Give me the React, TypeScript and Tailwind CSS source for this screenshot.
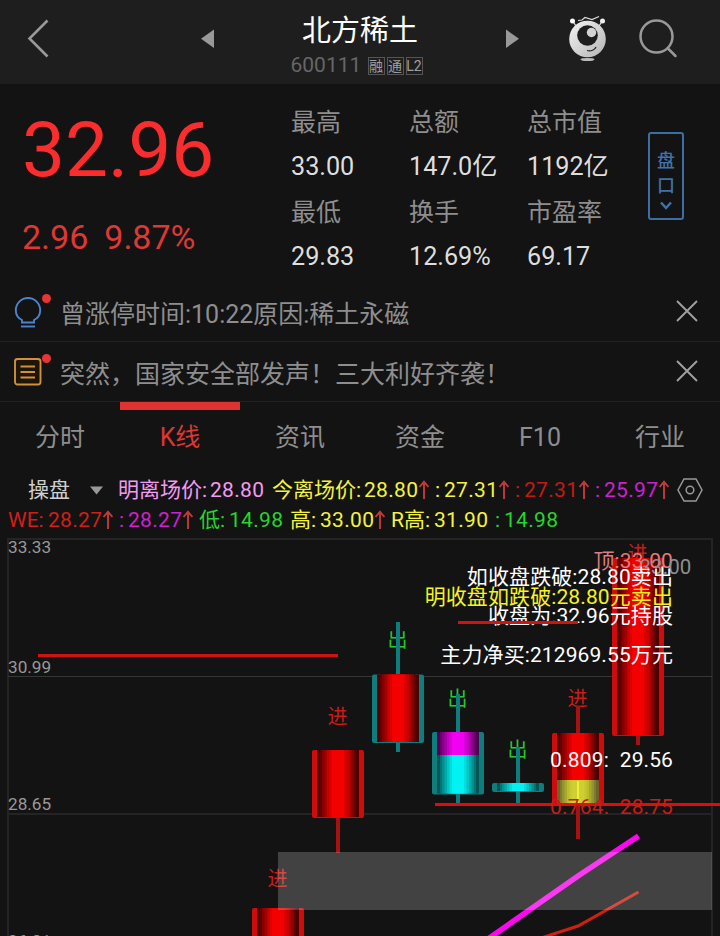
import { clsx } from 'clsx';

type Quote = { label: string; value: string };

const quotes: Quote[] = [
  { label: '最高', value: '33.00' },
  { label: '总额', value: '147.0亿' },
  { label: '总市值', value: '1192亿' },
  { label: '最低', value: '29.83' },
  { label: '换手', value: '12.69%' },
  { label: '市盈率', value: '69.17' },
];

const tabs = ['分时', 'K线', '资讯', '资金', 'F10', '行业'];

type Segment = {
  label: string;
  value: string;
  up?: boolean;
  color: string;
  width: string;
  labelWidth: string;
};

const rowOne: Segment[] = [
  { label: '明离场价:', value: '28.80', color: 'text-[#f29bf2]', width: 'w-[154px]', labelWidth: 'w-[92px]' },
  { label: '今离场价:', value: '28.80', up: true, color: 'text-[#f4f43c]', width: 'w-[163px]', labelWidth: 'w-[92px]' },
  { label: ':', value: '27.31', up: true, color: 'text-[#f4f43c]', width: 'w-[80px]', labelWidth: 'w-[9px]' },
  { label: ':', value: '27.31', up: true, color: 'text-[#c41a14]', width: 'w-[80px]', labelWidth: 'w-[9px]' },
  { label: ':', value: '25.97', up: true, color: 'text-[#cf1fd2]', width: 'w-[82px]', labelWidth: 'w-[9px]' },
];

const rowTwo: Segment[] = [
  { label: 'WE:', value: '28.27', up: true, color: 'text-[#d01f18]', width: 'w-[111px]', labelWidth: 'w-[40px]' },
  { label: ':', value: '28.27', up: true, color: 'text-[#cf1fd2]', width: 'w-[80px]', labelWidth: 'w-[9px]' },
  { label: '低:', value: '14.98', color: 'text-[#25d62b]', width: 'w-[91px]', labelWidth: 'w-[30px]' },
  { label: '高:', value: '33.00', up: true, color: 'text-[#f4f43c]', width: 'w-[101px]', labelWidth: 'w-[30px]' },
  { label: 'R高:', value: '31.90', color: 'text-[#f4f43c]', width: 'w-[104px]', labelWidth: 'w-[43px]' },
  { label: ':', value: '14.98', color: 'text-[#25d62b]', width: 'w-[70px]', labelWidth: 'w-[9px]' },
];

function Header() {
  return (
    <header className="flex h-[84px] items-start bg-[#1e1e1e]">
      <svg className="mt-[19px] ml-[27px] h-10 w-[22px]" viewBox="0 0 22 40" fill="none" stroke="#999" strokeWidth="2.6">
        <path d="M20.500 1.500 2.500 19.500 20.500 37.500" />
      </svg>
      <svg className="mt-[29px] ml-[152px] h-5 w-[13px]" viewBox="0 0 13 20" fill="#999">
        <path d="M13 .5v18.500L0 9.750z" />
      </svg>
      <div className="flex w-[292px] flex-col items-center">
        <h1 className="mt-[11px] text-[29px] leading-10 text-white">北方稀土</h1>
        <div className="mr-[7px] flex h-[30px] items-center text-[21px] text-[#666]">
          <span className="w-[77px]">600111</span>
          <div className="flex gap-[2px] text-[14px] leading-4 text-[#a0a0a0]">
            {['融', '通', 'L2'].map(tag => (
              <span
                key={tag}
                className="flex h-[18px] w-[17px] items-center justify-center border border-[#555]"
              >
                {tag}
              </span>
            ))}
          </div>
        </div>
      </div>
      <svg className="mt-[29px] h-5 w-[13px]" viewBox="0 0 13 20" fill="#999">
        <path d="M0 .5v18.500L13 9.750z" />
      </svg>
      <Mascot />
      <svg className="mt-[18px] ml-[28px] h-10 w-10" viewBox="0 0 40 40" fill="none" stroke="#999" strokeWidth="2.500">
        <circle cx="18.500" cy="18.500" r="16" />
        <path d="M30 30.500 37.500 38" strokeLinecap="round" />
      </svg>
    </header>
  );
}

function Mascot() {
  return (
    <svg className="mt-[14px] ml-[46px] h-12 w-[45px]" viewBox="565 14 45 48">
      <defs>
        <linearGradient id="head" x1="0" y1="0" x2="1" y2="1">
          <stop offset="0" stopColor="#f4f4f4" />
          <stop offset="1" stopColor="#b4b4b4" />
        </linearGradient>
      </defs>
      <path d="M573 21.500l4 6M602 21.500l-4 6" stroke="#ddd" strokeWidth="1.300" />
      <circle cx="572.500" cy="21" r="2.500" fill="#fff" />
      <circle cx="602.500" cy="21" r="2.500" fill="#eee" />
      <path d="M578 20.500l4-.5 3-2.500 7 2 7-3" fill="none" stroke="#ddd" strokeWidth="1.200" />
      <circle cx="587.500" cy="39" r="18.300" fill="url(#head)" />
      <circle cx="587.500" cy="35.500" r="10.300" fill="#1e1e1e" />
      <circle cx="591.500" cy="32.500" r="4.700" fill="#d4d4d4" />
      <path d="M587 50.500c4 1 8-.5 9-3.500" fill="none" stroke="#222" strokeWidth="1.200" />
      <ellipse cx="587.500" cy="59.500" rx="7" ry="1.600" fill="#bbb" />
    </svg>
  );
}

function QuotePanel() {
  return (
    <section className="flex h-[198px]">
      <div className="w-[291px] pl-[22px] text-[#f92d2d]">
        <div className="mt-[20px] h-[92px] text-[76.500px] leading-[92px]">32.96</div>
        <div className="mt-[21px] flex gap-4 text-[34px] leading-10 text-[#dc3836]">
          <span>2.96</span>
          <span>9.87%</span>
        </div>
      </div>
      <div className="mt-[15px] grid h-[180px] grid-cols-[118px_118px_121px] grid-rows-2 text-[25px] leading-[45px]">
        {quotes.map(quote => (
          <div key={quote.label}>
            <div className="h-[45px] pt-[1px] text-[#8e8e8e]">{quote.label}</div>
            <div className="text-[25.200px] text-[#dedede]">{quote.value}</div>
          </div>
        ))}
      </div>
      <button className="mt-12 flex h-[88px] w-9 flex-col items-center rounded-[3px] border-2 border-[#3c6da3] pt-[14px] text-[18px] leading-[25px] font-medium text-[#3f72ab]">
        <span>盘</span>
        <span>口</span>
        <svg className="mt-[3px] h-[10px] w-3" viewBox="0 0 12 10" fill="none" stroke="currentColor" strokeWidth="2.500">
          <path d="M1 1.500 6 7l5-5.500" />
        </svg>
      </button>
    </section>
  );
}

function BulbIcon() {
  return (
    <svg className="h-8 w-7" viewBox="0 0 28 32" fill="none" stroke="#4b83cc" strokeWidth="1.900">
      <path d="M8 26.500V24C4 22 1.800 18.500 1.800 14.200a12.200 12.200 0 0 1 24.400 0c0 4.300-2.200 7.800-6.200 9.800v2.500z" />
      <path d="M7 30.500h14" />
    </svg>
  );
}

function ArticleIcon() {
  return (
    <svg className="h-8 w-7" viewBox="0 0 28 32" fill="none" stroke="#d0913a" strokeWidth="1.900">
      <rect x="1" y="3" width="25.500" height="25.500" rx="2.500" fill="#1c1508" />
      <path d="M6.500 10.500h14.500M6.500 16h14.500M6.500 21.500h14.500" />
    </svg>
  );
}

function Notice({ icon, text }: { icon: React.ReactNode; text: string }) {
  return (
    <div className="flex h-[60px] items-center border-b border-[#222] pl-[14px] text-[25px] text-[#8e8e8e]">
      <div className="relative w-[46px]">
        {icon}
        <span className="absolute top-[-2px] left-7 h-[9px] w-[9px] rounded-full bg-[#e63535]" />
      </div>
      <span className="flex-1 pt-[6px] whitespace-nowrap">{text}</span>
      <svg className="mr-[22px] mb-[1px] h-[22px] w-[22px]" viewBox="0 0 22 22" stroke="#a0a0a0" strokeWidth="1.900">
        <path d="M1 1l20 20M21 1 1 21" />
      </svg>
    </div>
  );
}

function Tabs() {
  return (
    <nav className="grid h-[73px] grid-cols-6 text-[25px] leading-[55px] text-[#8e8e8e]">
      {tabs.map(tab => (
        <div
          key={tab}
          className={clsx(
            'h-full border-t-8 text-center',
            tab === 'K线' ? 'border-[#e13232] text-[#db3733]' : 'border-transparent',
          )}
        >
          {tab}
        </div>
      ))}
    </nav>
  );
}

function SegmentItem({ segment }: { segment: Segment }) {
  return (
    <div className={clsx('flex shrink-0 items-center', segment.width, segment.color)}>
      <span className={clsx('shrink-0 whitespace-nowrap', segment.labelWidth)}>{segment.label}</span>
      <span className="tracking-[0.3px]">{segment.value}</span>
      {segment.up && (
        <svg className="h-5 w-[11px] shrink-0" viewBox="0 0 11 20" fill="none" stroke="#c03b37" strokeWidth="1.900">
          <path d="M6 19V2M1.500 7 6 1.800 10.500 7" />
        </svg>
      )}
    </div>
  );
}

function Indicators() {
  return (
    <section className="text-[21px] leading-[30px]">
      <div className="flex h-[30px] items-center">
        <div className="flex w-[118px] shrink-0 items-center pl-7 text-[#d0d0d0]">
          操盘
          <svg className="ml-5 h-[9px] w-[13px]" viewBox="0 0 13 9" fill="#999">
            <path d="M0 .5h13L6.500 8.500z" />
          </svg>
        </div>
        {rowOne.map((segment, i) => (
          <SegmentItem key={i} segment={segment} />
        ))}
        <svg className="h-6 w-[26px] shrink-0" viewBox="0 0 26 24" fill="none" stroke="#999" strokeWidth="1.500">
          <path d="M7 1h12l6 11-6 11H7L1 12z" />
          <circle cx="13" cy="12" r="3.800" />
        </svg>
      </div>
      <div className="flex h-[30px] items-center pl-2">
        {rowTwo.map((segment, i) => (
          <SegmentItem key={i} segment={segment} />
        ))}
      </div>
    </section>
  );
}

// half width of each nested stick, outermost first
const sticks = [21, 18, 16, 13.5, 11, 8.5, 6];

const reds = ['#4c0000', '#640000', '#850000', '#a50000', '#c40000', '#de0000', '#f40000'];
const cyans = ['#005454', '#007575', '#009090', '#00abab', '#00c4c4', '#00dede', '#00f2f2'];
const magentas = ['#500050', '#6c006c', '#870087', '#a500a5', '#c100c1', '#dc00dc', '#f200f2'];
const yellows = ['#67662e', '#7d7c2e', '#94932e', '#a9a82e', '#bdbc2f', '#c8c830', '#cfcf31'];

function Sticks({ x, top, bottom, colors }: { x: number; top: number; bottom: number; colors: string[] }) {
  return (
    <>
      {sticks.map((half, i) => (
        <rect key={half} x={x - half} y={top} width={half * 2} height={bottom - top} fill={colors[i]} />
      ))}
    </>
  );
}

type CandleProps = {
  x: number;
  high: number;
  top: number;
  bottom: number;
  low: number;
  frame: string;
  wick: string;
  colors: string[];
};

function Candle({ x, high, top, bottom, low, frame, wick, colors }: CandleProps) {
  return (
    <g>
      <rect x={x - 2} y={high} width={4} height={low - high} fill={wick} />
      <rect x={x - 26} y={top} width={52} height={bottom - top} rx={2} fill={frame} />
      <Sticks x={x} top={top} bottom={bottom - 1} colors={colors} />
    </g>
  );
}

const RED = '#cf0c0c';
const TEAL = '#0d7d7d';

function Chart() {
  return (
    <svg className="block h-[401px] w-[720px]" viewBox="0 535 720 401">
      <g fill="#242424">
        <rect x="7" y="538" width="706" height="2" />
        <rect x="7" y="538" width="2" height="400" />
        <rect x="711" y="538" width="2" height="400" />
        <rect x="8" y="813" width="704" height="2" />
      </g>
      <rect x="8" y="676" width="704" height="1" fill="#363636" />

      <g fill="#999" fontSize="17.200">
        <text x="8" y="553">33.33</text>
        <text x="8" y="673">30.99</text>
        <text x="8" y="810">28.65</text>
        <text x="8" y="947">26.31</text>
      </g>

      <g fill="#c91c18" fontSize="20" textAnchor="middle">
        <text x="277.500" y="885.500">进</text>
        <text x="337.500" y="723.500">进</text>
        <text x="577.500" y="705.500">进</text>
        <text x="637.500" y="560.500">进</text>
      </g>
      <g fill="#27c92c" fontSize="20" textAnchor="middle">
        <text x="397.500" y="646.500">出</text>
        <text x="457.500" y="705.500">出</text>
        <text x="517.500" y="756.500">出</text>
      </g>

      <Candle x={278} high={908} top={908} bottom={945} low={945} frame={RED} wick="#a51212" colors={reds} />
      <Candle x={338} high={750} top={750} bottom={818} low={853} frame={RED} wick="#a51212" colors={reds} />
      <Candle x={398} high={622} top={674.5} bottom={743} low={752} frame={TEAL} wick={TEAL} colors={reds} />
      <Candle x={458} high={694} top={732} bottom={794.5} low={803} frame={TEAL} wick={TEAL} colors={cyans} />
      <Sticks x={458} top={732} bottom={755} colors={magentas} />
      <Candle x={518} high={747} top={783} bottom={792} low={804} frame={TEAL} wick={TEAL} colors={cyans} />
      <Candle x={578} high={706} top={733} bottom={806} low={839} frame={RED} wick="#a51212" colors={reds} />
      <Sticks x={578} top={780} bottom={806} colors={yellows} />
      <rect x="577" y="781" width="2" height="24" fill="#f0ee3a" />
      <Candle x={638} high={558} top={558} bottom={736} low={745} frame={RED} wick="#a51212" colors={reds} />

      <rect x="38" y="654" width="300" height="3" fill="#cc1512" />
      <rect x="435" y="803" width="285" height="3" fill="#e00c0c" />

      <polyline points="485,941 578,876 638.500,836" fill="none" stroke="#fb08f0" strokeWidth="5.500" />
      <polyline points="535,940 578,926 638.500,892" fill="none" stroke="#cf2010" strokeWidth="3" />

      <g fontSize="21" textAnchor="end" fill="#fff" letterSpacing="0.100">
        <text x="673" y="568" fill="#dc7d7d">顶:33.00</text>
        <text x="691.500" y="574" fill="#8f8f8f" fontSize="20.500">33.00</text>
        <text x="673" y="584">如收盘跌破:28.80卖出</text>
        <text x="673" y="603.500" fill="#f4f41e">明收盘如跌破:28.80元卖出</text>
        <text x="673" y="623">收盘为:32.96元持股</text>
        <text x="673" y="661.500">主力净买:212969.55万元</text>
        <text x="673" y="767">29.56</text>
        <text x="673" y="814" fill="#c91c18">28.75</text>
      </g>
      <g fontSize="21" fill="#fff">
        <text x="550" y="767" letterSpacing="0.200">0.809:</text>
        <text x="550" y="814" letterSpacing="0.200" fill="#c91c18">0.764:</text>
      </g>
      <rect x="458" y="621" width="120" height="3" fill="#d01212" />

      <rect x="278" y="852" width="434" height="58" fill="#fff" fillOpacity="0.2" />
    </svg>
  );
}

export default function App() {
  return (
    <div className="h-[936px] w-[720px] overflow-hidden bg-[#131313] font-['Roboto','Noto_Sans_CJK_SC',sans-serif]">
      <Header />
      <QuotePanel />
      <Notice icon={<BulbIcon />} text="曾涨停时间:10:22原因:稀土永磁" />
      <Notice icon={<ArticleIcon />} text="突然，国家安全部发声！三大利好齐袭！" />
      <Tabs />
      <Indicators />
      <Chart />
    </div>
  );
}
